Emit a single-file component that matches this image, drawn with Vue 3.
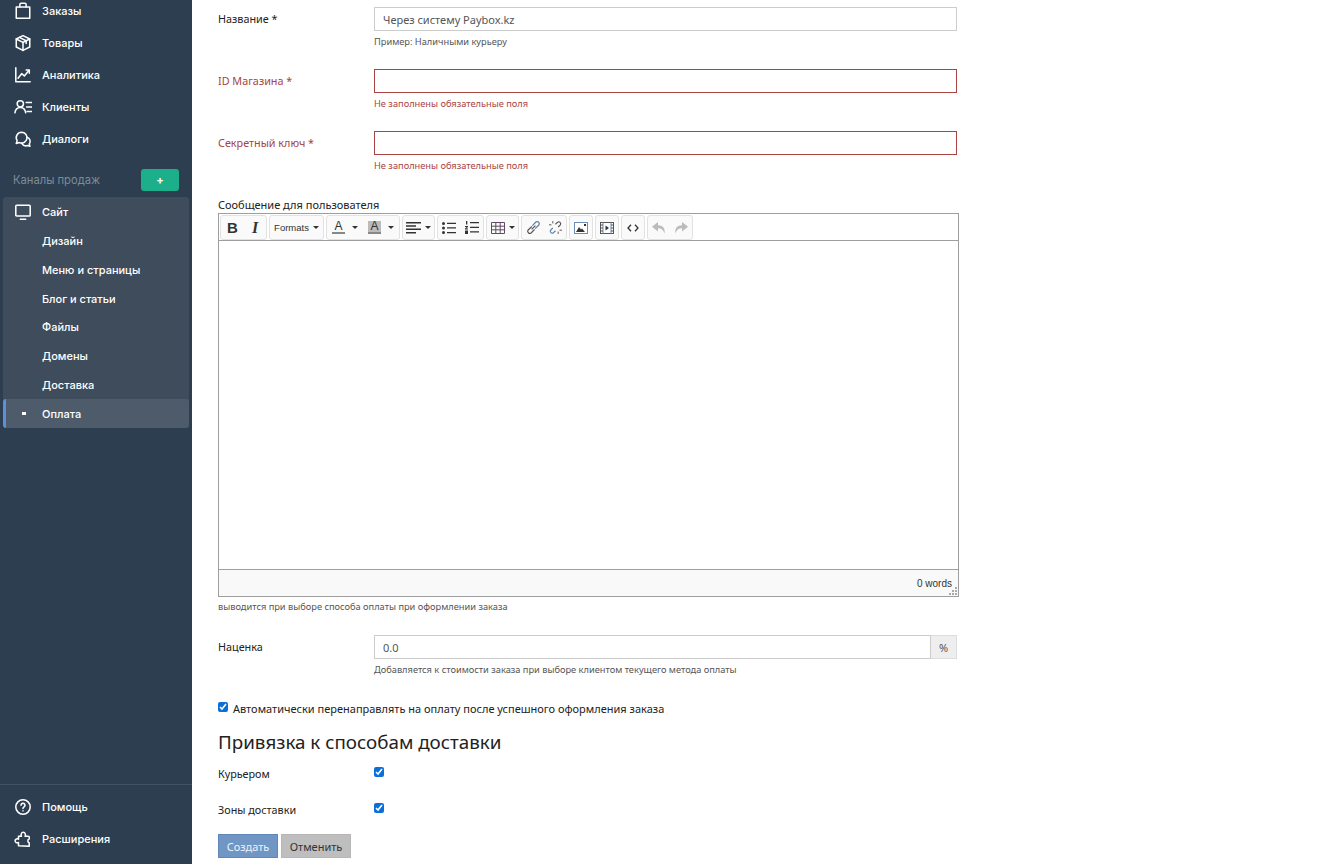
<template>
  <div class="page">
    <aside class="sidebar">
      <ul class="nav main-nav">
        <li v-for="item in mainNav" :key="item.label" class="nav-item">
          <svg class="nav-icon" viewBox="0 0 20 20" fill="none" stroke="#fff" stroke-width="1.7" stroke-linejoin="round" stroke-linecap="round">
            <path v-for="d in item.paths" :key="d" :d="d" />
          </svg>
          <span>{{ item.label }}</span>
        </li>
      </ul>

      <div class="channels">
        <span>Каналы продаж</span>
        <button class="add-btn">+</button>
      </div>

      <div class="site-group">
        <div class="nav-item site-head">
          <svg class="nav-icon" viewBox="0 0 20 20" fill="none" stroke="#fff" stroke-width="1.7" stroke-linejoin="round" stroke-linecap="round">
            <rect x="2" y="2.5" width="16" height="12" rx="1" />
            <path d="M7 18h6" />
          </svg>
          <span>Сайт</span>
        </div>
        <div v-for="sub in siteNav" :key="sub" class="sub-item">{{ sub }}</div>
        <div class="sub-item active"><i class="dot"></i>Оплата</div>
      </div>

      <ul class="nav bottom-nav">
        <li class="nav-item">
          <svg class="nav-icon" viewBox="0 0 20 20" fill="none" stroke="#fff" stroke-width="1.7" stroke-linecap="round">
            <circle cx="10" cy="10" r="8" />
            <path d="M7.8 8a2.2 2.2 0 1 1 3.4 1.9c-.8.5-1.2 1-1.2 1.8" />
            <path d="M10 14.2v.1" />
          </svg>
          <span>Помощь</span>
        </li>
        <li class="nav-item">
          <svg class="nav-icon" viewBox="0 0 20 20" fill="none" stroke="#fff" stroke-width="1.7" stroke-linejoin="round">
            <path d="M5 17.5v-3.7c-1.2.9-3.800.4-3.800-1.800s2.600-2.700 3.800-1.800V7h3.300c-.9-1.200-.4-4.500 2-4.500s2.900 3.300 2 4.500h3.700c.6 0 .9.400.9.900v2c-.6 0-1.500.1-1.500 2.100s.9 2.100 1.500 2.100v3.900z" />
          </svg>
          <span>Расширения</span>
        </li>
      </ul>
    </aside>

    <main class="content">
      <div class="row">
        <label class="row-label">Название *</label>
        <div class="field">
          <input class="text-input" value="Через систему Paybox.kz" />
          <p class="help">Пример: Наличными курьеру</p>
        </div>
      </div>
      <div class="row has-error">
        <label class="row-label">ID Магазина *</label>
        <div class="field">
          <input class="text-input" />
          <p class="help">Не заполнены обязательные поля</p>
        </div>
      </div>
      <div class="row has-error">
        <label class="row-label">Секретный ключ *</label>
        <div class="field">
          <input class="text-input" />
          <p class="help">Не заполнены обязательные поля</p>
        </div>
      </div>

      <div class="editor-block">
        <label class="editor-label">Сообщение для пользователя</label>
        <div class="editor">
          <div class="toolbar">
            <div class="tb-group">
              <button class="tb-btn w23 bold">B</button>
              <button class="tb-btn w22 italic">I</button>
            </div>
            <div class="tb-group">
              <button class="tb-btn formats">Formats<i class="caret"></i></button>
            </div>
            <div class="tb-group">
              <button class="tb-btn color-btn"><span class="color-a">A</span><i class="caret"></i></button>
              <button class="tb-btn color-btn"><span class="color-a filled">A</span><i class="caret"></i></button>
            </div>
            <div class="tb-group">
              <button class="tb-btn w31">
                <svg width="15" height="12" viewBox="0 0 15 12" fill="#333"><path d="M0 0h15v1.500H0zM0 3.300h10v1.500H0zM0 6.600h15v1.500H0zM0 9.900h10v1.500H0z" /></svg>
                <i class="caret"></i>
              </button>
            </div>
            <div class="tb-group">
              <button class="tb-btn w22">
                <svg width="14" height="12" viewBox="0 0 14 12" fill="#333"><circle cx="1.500" cy="1.500" r="1.500" /><circle cx="1.500" cy="6" r="1.500" /><circle cx="1.500" cy="10.500" r="1.500" /><path d="M5 .8h9v1.300H5zM5 5.300h9v1.300H5zM5 9.900h9v1.300H5z" /></svg>
              </button>
              <button class="tb-btn w23">
                <svg width="14" height="13" viewBox="0 0 14 13" fill="#333"><path d="M1 0h1.300v3.500H1zM0 5h3v1L1.300 7.500H3v1H0v-1L1.700 6H0zM0 9.500h3v3.500H0zM5 1h9v1.300H5zM5 5.700h9v1.300H5zM5 10.300h9v1.300H5z" /></svg>
              </button>
            </div>
            <div class="tb-group">
              <button class="tb-btn w31">
                <svg width="14" height="12" viewBox="0 0 14 12" fill="none" stroke="#5f4a63"><path d="M.5.500h13v11H.5zM.5 4.200h13M.5 7.800h13M4.800.5v11M9.200.5v11" /></svg>
                <i class="caret"></i>
              </button>
            </div>
            <div class="tb-group">
              <button class="tb-btn w22">
                <svg width="15" height="15" viewBox="0 0 14 14" fill="none" stroke="#555" stroke-width="1.100"><path d="M5.200 8.800l3.600-3.600M5.500 6L2 9.300a2 2 0 0 0 2.800 2.800L8 8.700" /><path d="M8.500 8L12 4.700a2 2 0 0 0-2.800-2.800L6 5.300" stroke="#5b7fa8" /></svg>
              </button>
              <button class="tb-btn w22">
                <svg width="15" height="15" viewBox="0 0 14 14" fill="none" stroke="#555" stroke-width="1.100"><path d="M4.500 7.500L2.500 9.500a1.800 1.800 0 0 0 2.500 2.500l2-2" stroke="#5b7fa8" /><path d="M9.500 6.500L11.500 4.500A1.800 1.800 0 0 0 9 2L7 4" /><path d="M1 4.500h2.200M4.500 1v2.200M13 9.500h-2.200M9.500 13v-2.200" stroke-width=".9" /></svg>
              </button>
            </div>
            <div class="tb-group">
              <button class="tb-btn w22">
                <svg width="14" height="12" viewBox="0 0 14 12"><rect x=".5" y=".5" width="13" height="11" fill="#fff" stroke="#6b8db5" /><path d="M2 10l3-5 2 2.500 1-1 3 3.500z" fill="#333" /><rect x="10" y="2" width="2" height="2" fill="#333" /></svg>
              </button>
            </div>
            <div class="tb-group">
              <button class="tb-btn w22">
                <svg width="14" height="12" viewBox="0 0 14 12"><rect x=".5" y=".5" width="13" height="11" fill="#fff" stroke="#555" /><path d="M3 .5v11M11 .5v11" stroke="#6b8db5" fill="none" /><path d="M.5 3h2.500M.5 6h2.500M.5 9h2.500M11 3h2.500M11 6h2.500M11 9h2.500" stroke="#555" fill="none" /><path d="M5.500 3.500L9 6l-3.500 2.500z" fill="#333" /></svg>
              </button>
            </div>
            <div class="tb-group">
              <button class="tb-btn w22">
                <svg width="12" height="8" viewBox="0 0 12 8" fill="none" stroke="#333" stroke-width="1.300"><path d="M4 .7L1 4l3 3.300M8 .7L11 4 8 7.300" /></svg>
              </button>
            </div>
            <div class="tb-group">
              <button class="tb-btn w22">
                <svg width="14" height="12" viewBox="0 0 14 12" fill="#bbb"><path d="M6 0L0 4.700l6 4.700V6.300c3 0 5 1 6.500 5.200C13.500 6 10.500 3.300 6 3.200z" /></svg>
              </button>
              <button class="tb-btn w22">
                <svg width="14" height="12" viewBox="0 0 14 12" fill="#bbb"><path d="M8 0l6 4.700-6 4.700V6.300c-3 0-5 1-6.500 5.200C.5 6 3.500 3.300 8 3.200z" /></svg>
              </button>
            </div>
          </div>
          <div class="edit-area"></div>
          <div class="statusbar">
            <span>0 words</span>
            <svg class="resize" width="9" height="9" viewBox="0 0 9 9" fill="#aaa"><path d="M7 1h2v2H7zM4 4h2v2H4zM7 4h2v2H7zM1 7h2v2H1zM4 7h2v2H4zM7 7h2v2H7z" /></svg>
          </div>
        </div>
        <p class="help editor-help">выводится при выборе способа оплаты при оформлении заказа</p>
      </div>

      <div class="row markup">
        <label class="row-label">Наценка</label>
        <div class="field">
          <div class="input-group">
            <input class="text-input" value="0.0" />
            <span class="addon">%</span>
          </div>
          <p class="help">Добавляется к стоимости заказа при выборе клиентом текущего метода оплаты</p>
        </div>
      </div>

      <label class="auto-check">
        <input type="checkbox" checked />
        <span>Автоматически перенаправлять на оплату после успешного оформления заказа</span>
      </label>

      <h3 class="section-title">Привязка к способам доставки</h3>

      <div v-for="opt in deliveryOptions" :key="opt" class="check-row">
        <label class="row-label">{{ opt }}</label>
        <input type="checkbox" checked />
      </div>

      <div class="actions">
        <button class="btn btn-primary">Создать</button>
        <button class="btn btn-default">Отменить</button>
      </div>
    </main>
  </div>
</template>

<script setup>
const mainNav = [
  { label: 'Заказы', paths: ['M2.500 5.500h15v12.500h-15z', 'M6.500 5.500V3a1.500 1.500 0 0 1 1.500-1.500h4A1.500 1.500 0 0 1 13.500 3v2.500'] },
  { label: 'Товары', paths: ['M10 1.800l7.500 3.700v9L10 18.200l-7.500-3.700v-9z', 'M2.500 5.500L10 9.300l7.500-3.800', 'M10 9.300v8.900', 'M6 3.700l7.500 3.800v3'] },
  { label: 'Аналитика', paths: ['M2 2v15.500h16', 'M4.500 13.500l4-5 3 2.500 5-6', 'M13.500 4.500h3.500V8'] },
  { label: 'Клиенты', paths: ['M7 3a3.500 3.500 0 1 1 0 7 3.500 3.500 0 0 1 0-7z', 'M1 16.500c.5-4 2.800-6 6-6s5.500 2 6 6', 'M13.500 5h6M14 10h5.500M14.500 15h5'] },
  { label: 'Диалоги', paths: ['M8.500 2.500a6 6 0 0 0-5 9.300L2.500 15l3.500-1a6 6 0 1 0 2.500-11.500z', 'M14.500 8a4.800 4.800 0 0 1 2.500 7.500l.7 2.500-2.700-.8a4.800 4.800 0 0 1-6.500-2.700'] }
]

const siteNav = ['Дизайн', 'Меню и страницы', 'Блог и статьи', 'Файлы', 'Домены', 'Доставка']
const deliveryOptions = ['Курьером', 'Зоны доставки']
</script>

<style>
html,
body {
  margin: 0;
  background: #fff;
  overflow: hidden;
}
</style>

<style scoped>
.page {
  display: flex;
  height: 864px;
  overflow: hidden;
  font-family: "Noto Sans", "Open Sans", sans-serif;
  color: #222;
}

.sidebar {
  width: 192px;
  flex-shrink: 0;
  display: flex;
  flex-direction: column;
  background: #2c3e50;
  color: #fff;
  font-family: Inter, "Noto Sans", sans-serif;
  font-size: 11px;
  font-weight: 500;
}

.nav {
  list-style: none;
  margin: 0;
  padding: 0;
}

.main-nav {
  margin-top: -5px;
}

.nav-item {
  display: flex;
  align-items: center;
  height: 32px;
  padding-left: 14px;
}

.nav-icon {
  width: 18px;
  height: 18px;
  margin-right: 10px;
  flex-shrink: 0;
}

.channels {
  display: flex;
  align-items: center;
  justify-content: space-between;
  height: 22px;
  margin: 14px 13px 6px 13px;
  color: #7f8b98;
  font-weight: 400;
  font-size: 11.2px;
}

.add-btn {
  width: 38px;
  height: 22px;
  padding: 0;
  border: 0;
  border-radius: 3px;
  background: #1cb08a;
  color: #fff;
  font-family: inherit;
  font-size: 11px;
  font-weight: 700;
}

.site-group {
  margin: 0 3px;
  border-radius: 3px;
  background: #3e4c5c;
  height: 231px;
}

.site-head {
  height: 29.6px;
  padding-left: 11px;
}

.sub-item {
  display: flex;
  align-items: center;
  height: 28.8px;
  padding-left: 39px;
  position: relative;
}

.sub-item.active {
  background: #4e5b6b;
  border-left: 3px solid #5b8fd9;
  border-radius: 3px;
  padding-left: 36px;
}

.dot {
  position: absolute;
  left: 16px;
  top: 13px;
  width: 4px;
  height: 3px;
  background: #fff;
}

.bottom-nav {
  margin-top: auto;
  padding: 6px 0 9px;
  border-top: 1px solid #435363;
}

.content {
  width: 741px;
  padding-left: 26px;
  padding-top: 7px;
  font-size: 11px;
}

.row {
  display: grid;
  grid-template-columns: 156px 583px;
  margin-bottom: 20px;
}

.row-label {
  font-size: 10.8px;
  line-height: 24px;
  color: #222;
}

.text-input {
  display: block;
  width: 100%;
  height: 24px;
  box-sizing: border-box;
  padding: 0 8px;
  border: 1px solid #ccc;
  border-radius: 0;
  outline: 0;
  font-family: inherit;
  font-size: 11px;
  color: #555;
}

.help {
  margin: 4px 0 0;
  font-size: 9.25px;
  line-height: 14px;
  color: #555;
}

.has-error .row-label,
.has-error .help {
  color: #a94442;
}

.has-error .text-input {
  border-color: #a94442;
}

.editor-block {
  margin-top: 25px;
  margin-bottom: 20px;
}

.editor-label {
  display: block;
  height: 15px;
  font-size: 11px;
  line-height: 13px;
  color: #222;
}

.editor {
  width: 741px;
  box-sizing: border-box;
  border: 1px solid #9e9e9e;
  font-family: "Liberation Sans", Arial, sans-serif;
}

.toolbar {
  display: flex;
  gap: 2px;
  height: 27px;
  padding: 1px 0 0 1px;
  box-sizing: border-box;
  border-bottom: 1px solid #9e9e9e;
  background: #fff;
}

.tb-group {
  display: flex;
  height: 23px;
  border: 1px solid #e2e2e2;
  border-radius: 3px;
  background: #fafafa;
}

.tb-btn {
  display: flex;
  align-items: center;
  justify-content: center;
  gap: 3px;
  padding: 0;
  border: 0;
  height: 100%;
  background: transparent;
  color: #333;
}

.w22 { width: 22px; }
.w23 { width: 23px; }
.w31 { width: 31px; }

.bold {
  font-size: 15px;
  font-weight: 700;
}

.italic {
  font-family: "Liberation Serif", serif;
  font-size: 16px;
  font-weight: 700;
  font-style: italic;
}

.formats {
  width: 53px;
  font-size: 9.5px;
}

.color-btn {
  width: 36px;
  gap: 6px;
}

.color-a {
  display: inline-block;
  width: 13px;
  line-height: 11px;
  font-size: 12px;
  text-align: center;
  border-bottom: 2px solid #888;
}

.color-a.filled {
  background: #bbb;
}

.caret {
  display: inline-block;
  width: 0;
  height: 0;
  margin-left: 1px;
  border-top: 3px solid #333;
  border-left: 3px solid transparent;
  border-right: 3px solid transparent;
}

.edit-area {
  height: 328px;
  background: #fff;
}

.statusbar {
  position: relative;
  display: flex;
  align-items: center;
  justify-content: flex-end;
  height: 26px;
  padding-right: 6px;
  border-top: 1px solid #9e9e9e;
  background: #f9f9f9;
  font-size: 10px;
  color: #333;
}

.resize {
  position: absolute;
  right: 1px;
  bottom: 1px;
}

.editor-help {
  margin-top: 3px;
}

.markup {
  margin-top: 21px;
}

.input-group {
  display: flex;
  height: 24px;
}

.input-group .text-input {
  flex: 1;
  min-width: 0;
}

.addon {
  width: 26px;
  box-sizing: border-box;
  display: flex;
  align-items: center;
  justify-content: center;
  border: 1px solid #ddd;
  border-left: 0;
  background: #eee;
  color: #555;
  font-size: 11px;
}

input[type="checkbox"] {
  width: 10px;
  height: 10px;
  margin: 0;
  accent-color: #0a6fd6;
}

.auto-check {
  display: flex;
  align-items: center;
  height: 14px;
  margin-top: 24px;
  font-size: 11px;
  color: #222;
}

.auto-check input {
  margin-right: 5px;
  margin-top: -2px;
}

.section-title {
  margin: 15px 0 1px;
  font-size: 18.8px;
  font-weight: 400;
  line-height: 24px;
  color: #222;
}

.check-row {
  display: grid;
  grid-template-columns: 156px 10px;
  height: 36px;
  align-items: start;
}

.check-row .row-label {
  margin-top: 7px;
}

.check-row input {
  margin-top: 12px;
}

.actions {
  display: flex;
  gap: 3px;
  margin-top: 7px;
}

.btn {
  height: 24px;
  padding: 0;
  border: 1px solid;
  font-family: inherit;
  font-size: 11px;
}

.btn-primary {
  width: 60px;
  background: #6f96c4;
  border-color: #6189b8;
  color: #eef3f8;
}

.btn-default {
  width: 70px;
  background: #bebebe;
  border-color: #b6b6b6;
  color: #333;
}
</style>
